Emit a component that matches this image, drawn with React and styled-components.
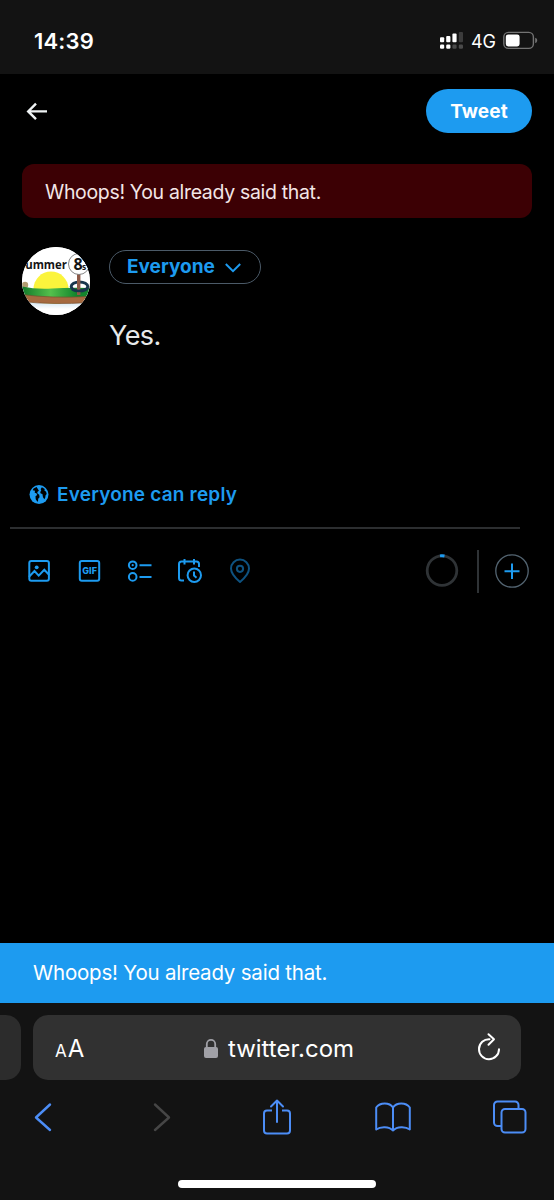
import React from "react";
import styled, { createGlobalStyle } from "styled-components";

const BLUE = "#1d9bf0";
const SAFARI_BLUE = "#4c8df6";
const CHROME = "#131313";

const GlobalStyle = createGlobalStyle`
  *, *::before, *::after { box-sizing: border-box; }
  html, body { margin: 0; background: #000; }
  body { font-family: Inter, "Liberation Sans", sans-serif; color: #fff; }
  svg { display: block; flex: none; overflow: visible; }
  button { font: inherit; background: none; border: 0; padding: 0; margin: 0; }
`;

const Screen = styled.div`
  width: 554px;
  height: 1200px;
  display: flex;
  flex-direction: column;
  overflow: hidden;
  background: #000;
`;

const Label = styled.span`
  font-size: ${(p) => p.$size}px;
  font-weight: ${(p) => p.$weight || 400};
  letter-spacing: ${(p) => p.$track || 0}px;
  color: ${(p) => p.$color || "#fff"};
  line-height: ${(p) => p.$line || 26}px;
  white-space: nowrap;
`;

const StatusBar = styled.header`
  height: 74px;
  flex: none;
  display: flex;
  justify-content: space-between;
  align-items: center;
  padding: 8px 16px 0 34px;
  background: ${CHROME};
`;

const StatusIcons = styled.div`
  display: flex;
  align-items: center;
`;

const NetworkLabel = styled(Label)`
  margin: 2px 7px 0 8px;
`;

const TopBar = styled.div`
  display: flex;
  justify-content: space-between;
  align-items: center;
  padding: 15px 22px 0 26px;
`;

const TweetButton = styled.button`
  width: 106px;
  height: 44px;
  padding-top: 2px;
  border-radius: 22px;
  background: ${BLUE};
`;

const ErrorBanner = styled.div`
  height: 54px;
  margin: 31px 22px 0;
  padding: 1px 23px 0;
  display: flex;
  align-items: center;
  border-radius: 12px;
  background: #3c0004;
`;

const Composer = styled.main`
  display: flex;
  gap: 19px;
  height: 233px;
  padding: 29px 22px 0;
`;

const Avatar = styled.div`
  width: 68px;
  height: 68px;
  flex: none;
  border-radius: 50%;
  overflow: hidden;
  background: #fff;
`;

const Draft = styled.div`
  display: flex;
  flex-direction: column;
  align-items: flex-start;
  gap: 33px;
  padding-top: 3px;
`;

const AudiencePill = styled.button`
  width: 152px;
  height: 34px;
  padding: 0 0 0 17px;
  display: flex;
  align-items: center;
  gap: 10px;
  border: 1.5px solid #4b5a68;
  border-radius: 17px;
`;

const ReplySetting = styled.div`
  display: flex;
  align-items: center;
  gap: 8px;
  height: 78px;
  margin: 0 34px 0 10px;
  padding: 12px 0 0 19px;
  border-bottom: 2px solid #2c2e30;
`;

const ToolRow = styled.div`
  display: flex;
  justify-content: space-between;
  align-items: center;
  height: 84px;
  padding: 0 25px 0 27px;
`;

const ToolGroup = styled.div`
  display: flex;
  align-items: center;
  gap: ${(p) => p.$gap}px;
`;

const Separator = styled.div`
  width: 2px;
  height: 43px;
  margin-right: -2px;
  background: #2f3336;
`;

const Toast = styled.div`
  height: 60px;
  flex: none;
  margin-top: auto;
  padding-left: 33px;
  display: flex;
  align-items: center;
  background: ${BLUE};
`;

const Safari = styled.footer`
  height: 197px;
  flex: none;
  display: flex;
  flex-direction: column;
  background: ${CHROME};
`;

const AddressRow = styled.div`
  display: flex;
  gap: 12px;
  height: 65px;
  margin-top: 12px;
`;

const PreviousTab = styled.div`
  width: 21px;
  border-radius: 0 15px 15px 0;
  background: #2c2c2c;
`;

const AddressBar = styled.div`
  width: 488px;
  padding: 2px 20px 0 22px;
  display: flex;
  justify-content: space-between;
  align-items: center;
  border-radius: 15px;
  background: #313131;
`;

const TextSize = styled.div`
  display: flex;
  align-items: baseline;
  gap: 1px;
  width: 57px;
  padding-top: 2px;
`;

const Site = styled.div`
  display: flex;
  align-items: center;
  gap: 10px;
  padding-top: 1px;
`;

const ReloadSlot = styled.div`
  width: 55px;
  padding-bottom: 3px;
  display: flex;
  justify-content: flex-end;
`;

const NavRow = styled.nav`
  height: 73px;
  padding: 0 26px 0 25px;
  display: flex;
  justify-content: space-between;
  align-items: center;
`;

const NavButton = styled.button`
  width: 36px;
  padding-left: ${(p) => p.$inset || 0}px;
  display: flex;
  justify-content: center;
`;

const HomeIndicator = styled.div`
  width: 198px;
  height: 8px;
  margin: 27px auto 0 178px;
  border-radius: 4px;
  background: #fff;
`;

const Stroke = ({ w, h, color = BLUE, width = 2, children, ...rest }) => (
  <svg
    width={w}
    height={h}
    viewBox={`0 0 ${w} ${h}`}
    fill="none"
    stroke={color}
    strokeWidth={width}
    strokeLinecap="round"
    strokeLinejoin="round"
    {...rest}
  >
    {children}
  </svg>
);

const SignalIcon = () => (
  <svg width="24" height="18" viewBox="0 0 24 18" fill="#fff">
    <rect x="1" y="5.2" width="4.2" height="5" rx="1" />
    <rect x="7.2" y="4" width="4.2" height="6.2" rx="1" />
    <rect x="13.4" y="1.4" width="4.2" height="8.8" rx="1" />
    <rect x="19.8" y="0" width="4.2" height="10.2" rx="1" fill="#3c3c3c" />
    <rect x="1" y="12.5" width="4.2" height="4.2" rx="1.2" />
    <rect x="7.2" y="12.5" width="4.2" height="4.2" rx="1.2" />
    <rect x="13.4" y="12.5" width="4.2" height="4.2" rx="1.2" fill="#4a4a4a" />
    <rect x="19.8" y="12.5" width="4.2" height="4.2" rx="1.2" fill="#4a4a4a" />
  </svg>
);

const BatteryIcon = () => (
  <svg width="35" height="18" viewBox="0 0 35 18" fill="none">
    <rect x="0.8" y="0.4" width="29.6" height="16" rx="4.6" stroke="#737373" strokeWidth="1.4" />
    <rect x="2.8" y="2.4" width="13.8" height="12" rx="2.4" fill="#fff" />
    <path d="M32.2 5.8c1.4.5 2 1.5 2 2.6s-.6 2.1-2 2.6z" fill="#737373" />
  </svg>
);

const BackArrow = () => (
  <Stroke w={22} h={20} color="#eff3f4" width={2.4} strokeLinecap="butt" strokeLinejoin="miter">
    <path d="M10 2.6 2.2 10.4l7.8 7.8M2 10.4h19" />
  </Stroke>
);

const AvatarArt = () => (
  <svg width="68" height="68" viewBox="0 0 68 68">
    <defs>
      <linearGradient id="grass" x1="0" x2="1">
        <stop offset="0" stopColor="#12792a" />
        <stop offset="0.42" stopColor="#54c04c" />
        <stop offset="0.8" stopColor="#12852c" />
      </linearGradient>
      <linearGradient id="water" x1="0" x2="0" y1="0" y2="1">
        <stop offset="0" stopColor="#cfe4f0" />
        <stop offset="1" stopColor="#fff" />
      </linearGradient>
    </defs>
    <rect width="68" height="68" fill="#fff" />
    <circle cx="29" cy="42" r="17.5" fill="#fbf43c" />
    <circle cx="3" cy="38" r="3.2" fill="#b19b70" />
    <path d="M0 39.5Q14 42.500 30 41.500T68 41v11H0z" fill="url(#grass)" />
    <path d="M0 54.5Q30 58 68 55v7H0z" fill="url(#water)" />
    <path d="M0 47.5Q28 51.5 68 49.5v6Q30 58 0 54.5z" fill="#a66a40" stroke="#78502e" strokeWidth="0.7" />
    <ellipse cx="57.5" cy="39.5" rx="8.3" ry="4.6" fill="none" stroke="#18364d" strokeWidth="3" />
    <path d="M55 27h3.4v21H55z" fill="#8c5947" />
    <path d="M50 42.5q7 3 15-.5" fill="none" stroke="#18364d" strokeWidth="2.5" />
    <circle cx="57" cy="17" r="10.5" fill="#fff" stroke="#777" strokeWidth="0.9" />
    <g fontFamily='"Open Sans", "Noto Sans", sans-serif' fontWeight="700" fill="#151515">
      <text x="-2.5" y="22.3" fontSize="12.8" textLength="47.5" lengthAdjust="spacingAndGlyphs">summer</text>
      <text x="51.5" y="22.5" fontSize="16">8</text>
      <text x="60" y="23" fontSize="8.5">s</text>
    </g>
  </svg>
);

const PillChevron = () => (
  <Stroke w={16} h={10} width={2} strokeLinecap="butt" strokeLinejoin="miter">
    <path d="M0.8 2 8 9.2 15.2 2" />
  </Stroke>
);

const GlobeIcon = () => (
  <svg width="20" height="20" viewBox="0 0 20 20">
    <circle cx="10" cy="9.6" r="9.5" fill={BLUE} />
    <path
      d="M7.6 2 4.6 3.600 3.700 5.200l2.300.6-.3 2 1.700.4.8 1.800-1.700 1.300.2 3 1.600 2.300.7-.2.2-2.700 1.400-1.500-.4-2.400-1.700-1.300-.2-1.500L9.900 5.800 9 4.300z"
      fill="#000"
    />
    <path d="m12.900 2.200-1.200 1.900.5 1.600-1 1.400.5 1.500 1.700.4.6 3.300 1.300 2 1-1.700.2-2 1.200-1.600-.6-2.300-1.700-1.300.3-1.500z" fill="#000" />
  </svg>
);

const ImageIcon = () => (
  <Stroke w={24} h={24} width={2}>
    <rect x="2.3" y="2" width="19.6" height="19.8" rx="2" />
    <circle cx="9.7" cy="8.3" r="1.9" fill={BLUE} stroke="none" />
    <path d="m2.5 17.2 5-5.2 4.2 4.6 5.6-5.900 4.500 4.800" strokeLinejoin="miter" />
  </Stroke>
);

const GifIcon = () => (
  <Stroke w={24} h={24} width={2}>
    <rect x="2.8" y="2" width="19.4" height="19.8" rx="2" />
    <text
      x="5.2"
      y="15.3"
      fill={BLUE}
      stroke="none"
      fontFamily="Inter, sans-serif"
      fontWeight="800"
      fontSize="9"
      textLength="14.8"
    >
      GIF
    </text>
  </Stroke>
);

const PollIcon = () => (
  <Stroke w={24} h={24} width={2} strokeLinecap="butt">
    <circle cx="5.7" cy="6.2" r="3.8" />
    <circle cx="5.7" cy="6.2" r="1.1" fill={BLUE} stroke="none" />
    <circle cx="5.7" cy="17.9" r="3.8" />
    <path d="M12.5 6.2h12M12.5 17.9h12" />
  </Stroke>
);

const ScheduleIcon = () => (
  <Stroke w={26} h={26} width={2} strokeLinecap="butt">
    <path d="M7 22.5H4.500A2.500 2.500 0 0 1 2 20V6A2.500 2.500 0 0 1 4.500 3.500h15A2.500 2.500 0 0 1 22 6v3M7.500 1v5.500M17 1v5.500" />
    <circle cx="17.3" cy="17.2" r="6.7" />
    <path d="M17 13.5v4l2.500 2.200" />
  </Stroke>
);

const PinIcon = () => (
  <Stroke w={22} h={26} color="#0e5280" width={2}>
    <path d="M11 24C6.5 20.3 2 16 2 10.600a9 9 0 0 1 18 0C20 16 15.500 20.300 11 24z" />
    <circle cx="11" cy="10.8" r="3.1" />
  </Stroke>
);

const CountRing = () => (
  <Stroke w={34} h={34} color="#2f3336" width={2.8} strokeLinecap="butt">
    <circle cx="17" cy="16.6" r="14.8" />
    <path d="M15 1.9Q17 1.6 19.5 2" stroke={BLUE} />
  </Stroke>
);

const AddIcon = () => (
  <Stroke w={34} h={34} width={2} strokeLinecap="butt">
    <circle cx="17" cy="17" r="16.2" stroke="#536471" strokeWidth="1.3" />
    <path d="M17 9.5v15.4M9.5 17.2h15" />
  </Stroke>
);

const LockIcon = () => (
  <svg width="14" height="20" viewBox="0 0 14 20">
    <rect x="0" y="8" width="14" height="11" rx="2" fill="#a1a1a7" />
    <path d="M2.8 9V5a4.2 4.2 0 0 1 8.4 0V9" fill="none" stroke="#a1a1a7" strokeWidth="1.8" />
  </svg>
);

const ReloadIcon = () => (
  <Stroke w={24} h={28} color="#fff" width={2}>
    <path d="M12.5 6.2A10 10 0 1 0 22 16.2M11.500 1.200l5.500 5-5.500 5.600" />
  </Stroke>
);

const ChevronNav = ({ forward }) => (
  <Stroke w={16} h={28} width={2.4} color={forward ? "#464646" : SAFARI_BLUE}>
    <path d={forward ? "m1 1.5 14 13L1 27" : "M15 1.5 1 14.5 15 27"} />
  </Stroke>
);

const ShareIcon = () => (
  <Stroke w={28} h={36} width={2} color={SAFARI_BLUE}>
    <path d="M9 11.5H4A3 3 0 0 0 1 14.500v17a3 3 0 0 0 3 3h20a3 3 0 0 0 3-3v-17a3 3 0 0 0-3-3h-5" strokeLinecap="butt" />
    <path d="M14 23V1.5M8 7.5l6-6 6 6" />
  </Stroke>
);

const BookIcon = () => (
  <Stroke w={36} h={30} width={2} color={SAFARI_BLUE}>
    <path d="M18 28.5V5.500C14.500.2 5 .2 1.200 5.500v22C5.500 24.200 14 24.200 18 28.500 22 24.200 30.500 24.200 34.800 27.500v-22C31 .2 21.500.2 18 5.500" />
  </Stroke>
);

const TabsIcon = () => (
  <Stroke w={34} h={34} width={2} color={SAFARI_BLUE}>
    <path d="M8.5 26H4.500A3.500 3.500 0 0 1 1 22.500V5A3.500 3.500 0 0 1 4.500 1.500h17.500A3.500 3.500 0 0 1 25.500 5v4" strokeLinecap="butt" />
    <rect x="8.5" y="9" width="24" height="23.5" rx="3.5" />
  </Stroke>
);

export default function App() {
  return (
    <>
      <GlobalStyle />
      <Screen>
        <StatusBar>
          <Label $size={22} $weight={600} $track={0.2}>14:39</Label>
          <StatusIcons>
            <SignalIcon />
            <NetworkLabel $size={18}>4G</NetworkLabel>
            <BatteryIcon />
          </StatusIcons>
        </StatusBar>

        <TopBar>
          <BackArrow />
          <TweetButton>
            <Label $size={19} $weight={700} $track={0.15}>Tweet</Label>
          </TweetButton>
        </TopBar>

        <ErrorBanner>
          <Label $size={19.5} $track={-0.33} $color="#f3e6e7">Whoops! You already said that.</Label>
        </ErrorBanner>

        <Composer>
          <Avatar>
            <AvatarArt />
          </Avatar>
          <Draft>
            <AudiencePill>
              <Label $size={19} $weight={700} $color={BLUE}>Everyone</Label>
              <PillChevron />
            </AudiencePill>
            <Label $size={27} $track={-0.6} $line={37} $color="#e7e9ea">Yes.</Label>
          </Draft>
        </Composer>

        <ReplySetting>
          <GlobeIcon />
          <Label $size={19} $weight={600} $track={0.2} $color={BLUE}>Everyone can reply</Label>
        </ReplySetting>

        <ToolRow>
          <ToolGroup $gap={26}>
            <ImageIcon />
            <GifIcon />
            <PollIcon />
            <ScheduleIcon />
            <PinIcon />
          </ToolGroup>
          <ToolGroup $gap={18}>
            <CountRing />
            <Separator />
            <AddIcon />
          </ToolGroup>
        </ToolRow>

        <Toast>
          <Label $size={20.5} $track={-0.21}>Whoops! You already said that.</Label>
        </Toast>

        <Safari>
          <AddressRow>
            <PreviousTab />
            <AddressBar>
              <TextSize>
                <Label $size={17}>A</Label>
                <Label $size={24}>A</Label>
              </TextSize>
              <Site>
                <LockIcon />
                <Label $size={24} $line={28}>twitter.com</Label>
              </Site>
              <ReloadSlot>
                <ReloadIcon />
              </ReloadSlot>
            </AddressBar>
          </AddressRow>
          <NavRow>
            <NavButton><ChevronNav /></NavButton>
            <NavButton $inset={5}><ChevronNav forward /></NavButton>
            <NavButton><ShareIcon /></NavButton>
            <NavButton><BookIcon /></NavButton>
            <NavButton><TabsIcon /></NavButton>
          </NavRow>
          <HomeIndicator />
        </Safari>
      </Screen>
    </>
  );
}
